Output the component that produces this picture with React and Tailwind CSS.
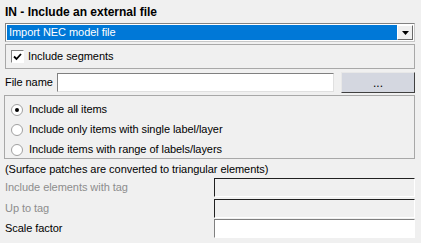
export default function App() {
  const font = { fontFamily: '"Liberation Sans", Arial, sans-serif' };
  const t11 = "text-[11px] tracking-[-0.05px] whitespace-nowrap";
  return (
    <div className="w-[421px] h-[243px] bg-[#f0f0f0] text-black leading-none overflow-hidden" style={font}>
      <div className="flex flex-col pl-[5px] w-[415px]">
        <div className="h-[23px] flex items-center font-bold text-[12px]">IN - Include an external file</div>
        <div className="h-[19px] border border-t-[#828282] border-l-[#828282] border-r-[#c8c8c8] border-b-[#c8c8c8] bg-white flex items-stretch p-[1px]">
          <div className={"flex-1 bg-[#0078d7] text-white flex items-center pl-[2px] " + t11}>Import NEC model file</div>
          <div className="w-[16px] bg-[#f0f0f0] border border-t-white border-l-white border-r-[#696969] border-b-[#696969] flex items-center justify-center">
            <svg width="7" height="4" viewBox="0 0 7 4"><path d="M0 0h7L3.5 4z" fill="#000" /></svg>
          </div>
        </div>
        <div className="mt-[2px] h-[25px] border border-[#a8a8a8] flex items-center pl-[5px] gap-[4px]">
          <div className="w-[13px] h-[13px] border border-t-[#808080] border-l-[#808080] border-r-white border-b-white bg-white flex items-center justify-center">
            <svg width="9" height="8" viewBox="0 0 9 8"><path d="M1 3.5l2.5 2.5L8 1" stroke="#000" strokeWidth="1.8" fill="none" /></svg>
          </div>
          <span className={t11}>Include segments</span>
        </div>
        <div className="mt-[3px] h-[21px] flex items-center">
          <span className={"w-[52px] " + t11}>File name</span>
          <div className="w-[277px] h-[19px] bg-white border border-t-[#808080] border-l-[#808080] border-r-[#e0e0e0] border-b-[#e0e0e0]" />
          <div className="ml-[7px] w-[74px] h-[21px] bg-[#d4d7e0] border border-t-[#e8e8e8] border-l-[#e8e8e8] border-r-[#404040] border-b-[#404040] flex items-center justify-center text-[12px]">...</div>
        </div>
        <div className="mt-[2px] h-[64px] border border-[#a8a8a8] flex flex-col justify-center gap-[7px] pl-[6px] -ml-[1px] pt-[5px]">
          {["Include all items", "Include only items with single label/layer", "Include items with range of labels/layers"].map((t, i) => (
            <div key={t} className="flex items-center gap-[6px] h-[13px]">
              <div className="w-[12px] h-[12px] rounded-full bg-white border border-[#a0a0a0] flex items-center justify-center">
                {i === 0 && <div className="w-[4px] h-[4px] rounded-full bg-black" />}
              </div>
              <span className={t11}>{t}</span>
            </div>
          ))}
        </div>
        <div className={"h-[18px] flex items-center pt-[2px] " + t11}>(Surface patches are converted to triangular elements)</div>
        {[
          ["Include elements with tag", true],
          ["Up to tag", true],
          ["Scale factor", false],
        ].map(([t, dis]) => (
          <div key={t} className="h-[20px] mt-[0.5px] flex items-center">
            <span className={"w-[209px] " + t11 + " " + (dis ? "text-[#8d8d8d]" : "text-black")}>{t}</span>
            <div className={"w-[201px] h-[19px] border border-r-white border-b-white " + (dis ? "bg-[#f0f0f0] border-t-[#202020] border-l-[#202020]" : "bg-white border-t-[#808080] border-l-[#808080]")} />
          </div>
        ))}
      </div>
    </div>
  );
}
